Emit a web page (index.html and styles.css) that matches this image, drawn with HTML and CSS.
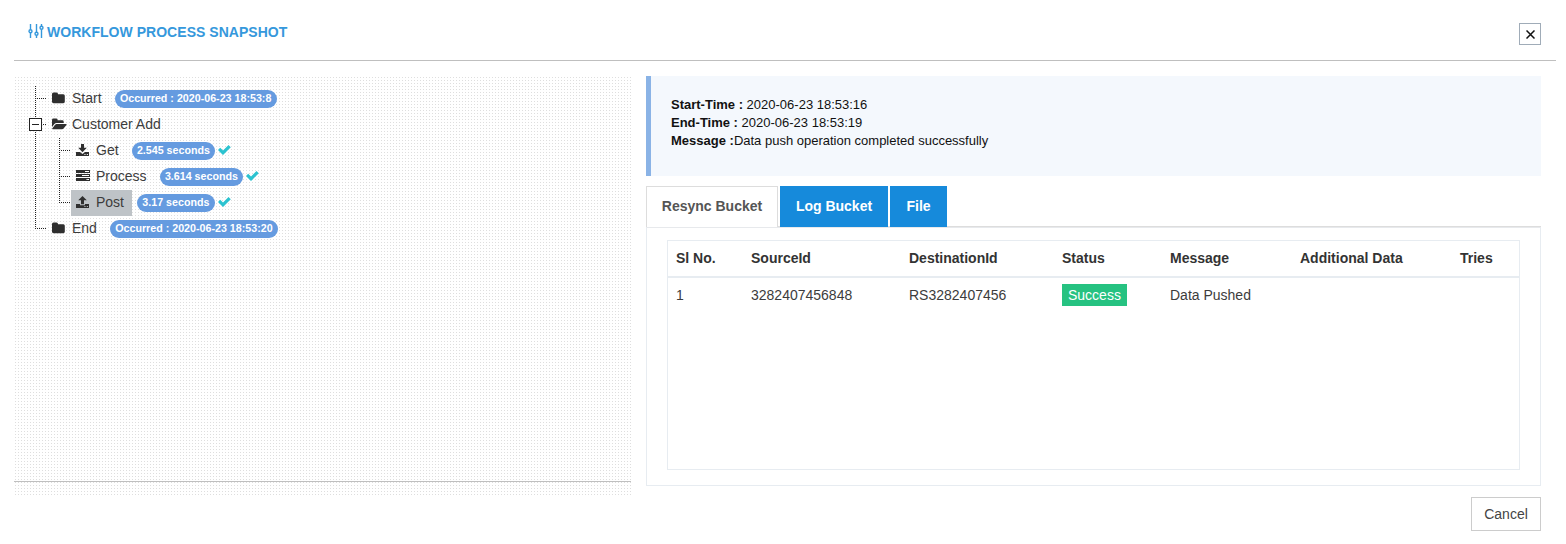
FILE: index.html
```html
<!DOCTYPE html>
<html lang="en">
<head>
<meta charset="utf-8">
<title>Workflow Process Snapshot</title>
<link rel="stylesheet" href="styles.css">
</head>
<body>
<svg class="defs" width="0" height="0" aria-hidden="true">
  <symbol id="folder" viewBox="0 0 13 12"><path d="M0 2Q0 .5 1.5 .5H4.5Q6 .5 6 2V2.3H11.3Q12.8 2.3 12.8 3.8V9.8Q12.8 11.2 11.3 11.2H1.5Q0 11.2 0 9.8Z"/></symbol>
  <symbol id="folder-open" viewBox="0 0 15 12"><path d="M0 9V2Q0 .6 1.4 .6H4.2Q5.6 .6 5.6 2V2.3H10.2Q11.7 2.3 11.7 3.7V5H4.6Q3.2 5 2.2 6.2ZM4.5 6H14.2Q15 6.2 14.4 7L11.8 10.3Q11 11.2 10 11.2H.7Q-.2 11.1 .4 10.3L3 7Q3.7 6.1 4.5 6Z"/></symbol>
  <symbol id="download" viewBox="0 0 13 12"><path d="M5 0H8V3.8H10.8L6.5 8.2L2.2 3.8H5Z"/><path fill-rule="evenodd" d="M0 8H4L6.5 10L9 8H13V12H0ZM8.4 10V11H9.5V10ZM10.8 10V11H11.9V10Z"/></symbol>
  <symbol id="upload" viewBox="0 0 13 12"><path d="M6.5 0L10.8 4.3H8V8.3H5V4.3H2.2Z"/><path fill-rule="evenodd" d="M0 8H4.1V9.2H8.9V8H13V12H0ZM8.4 10V11H9.5V10ZM10.8 10V11H11.9V10Z"/></symbol>
  <symbol id="tasks" viewBox="0 0 14 11"><path fill-rule="evenodd" d="M0 0H14V3H0ZM9 1V2H13V1ZM0 4H14V7H0ZM6 5V6H13V5ZM0 8H14V11H0ZM10.5 9V10H13V9Z"/></symbol>
  <symbol id="check" viewBox="0 0 13 10"><path d="M0 5L2.2 2.8L5 5.5L10.5 0L12.8 2.2L5 9.9Z"/></symbol>
</svg>
<header class="header">
  <h1 class="title">
    <svg class="sliders" width="16" height="15" viewBox="0 0 16 15"><path d="M2.5 0V5.5M2.5 9V14M8.5 0V8M8.5 11.5V14M13.5 0V2M13.5 5.5V14"/><circle cx="2.5" cy="7.2" r="1.5"/><circle cx="8.5" cy="9.7" r="1.5"/><circle cx="13.5" cy="3.7" r="1.5"/></svg>
    <span>WORKFLOW PROCESS SNAPSHOT</span>
  </h1>
  <button class="close" aria-label="Close"><svg width="9" height="9" viewBox="0 0 9 9"><path d="M.5 .5L8.5 8.5M8.5 .5L.5 8.5"/></svg></button>
</header>
<main class="content">
  <section class="tree-panel">
    <div class="tree">
      <div class="row"><i class="branch"></i><span class="node"><svg class="ico"><use href="#folder" width="13" height="12"/></svg>Start</span><span class="badge">Occurred : 2020-06-23 18:53:8</span></div>
      <div class="row"><i class="branch"><b class="toggle"></b></i><span class="node"><svg class="ico"><use href="#folder-open" width="15" height="12"/></svg>Customer Add</span></div>
      <div class="row"><i class="branch trunk"></i><i class="branch"></i><span class="node"><svg class="ico"><use href="#download" width="13" height="12"/></svg>Get</span><span class="badge">2.545 seconds</span><svg class="check" width="13" height="10"><use href="#check"/></svg></div>
      <div class="row"><i class="branch trunk"></i><i class="branch"></i><span class="node"><svg class="ico"><use href="#tasks" width="14" height="11"/></svg>Process</span><span class="badge">3.614 seconds</span><svg class="check" width="13" height="10"><use href="#check"/></svg></div>
      <div class="row"><i class="branch trunk"></i><i class="branch end"></i><span class="node selected"><svg class="ico"><use href="#upload" width="13" height="12"/></svg>Post</span><span class="badge">3.17 seconds</span><svg class="check" width="13" height="10"><use href="#check"/></svg></div>
      <div class="row"><i class="branch end"></i><span class="node"><svg class="ico"><use href="#folder" width="13" height="12"/></svg>End</span><span class="badge">Occurred : 2020-06-23 18:53:20</span></div>
    </div>
  </section>
  <section class="details">
    <div class="info">
      <div><b>Start-Time :</b> 2020-06-23 18:53:16</div>
      <div><b>End-Time :</b> 2020-06-23 18:53:19</div>
      <div><b>Message :</b>Data push operation completed successfully</div>
    </div>
    <nav class="tabs"><a class="tab active">Resync Bucket</a><a class="tab log">Log Bucket</a><a class="tab file">File</a></nav>
    <div class="tab-body">
      <div class="table-box">
        <table>
          <colgroup><col class="c1"><col class="c2"><col class="c3"><col class="c4"><col class="c5"><col class="c6"><col></colgroup>
          <thead><tr><th>Sl No.</th><th>SourceId</th><th>DestinationId</th><th>Status</th><th>Message</th><th>Additional Data</th><th>Tries</th></tr></thead>
          <tbody><tr><td>1</td><td>3282407456848</td><td>RS3282407456</td><td><span class="label">Success</span></td><td>Data Pushed</td><td></td><td></td></tr></tbody>
        </table>
      </div>
    </div>
    <footer class="footer"><button class="cancel">Cancel</button></footer>
  </section>
</main>
</body>
</html>
```
FILE: styles.css
```css
* { box-sizing: border-box; }
body { margin: 0; background: #fff; color: #3c3c3c; font: 14px/20px "Liberation Sans", Arial, sans-serif; overflow: hidden; }
.defs { display: block; }
.header { height: 61px; margin: 0 10px 0 14px; padding: 22px 15px 0 14px; border-bottom: 1px solid #bfbfbf; display: flex; justify-content: space-between; align-items: flex-start; }
.title { margin: 0; display: flex; gap: 3px; font-size: 14px; line-height: 20px; font-weight: bold; color: #3598dc; letter-spacing: .03px; }
.sliders { margin-top: 2px; fill: #fff; stroke: #3598dc; stroke-width: 1.4; }
.close { width: 22px; height: 22px; margin-top: 1px; padding: 1px 0 0 1px; border: 1px solid #a0acb8; background: #fff; display: flex; align-items: center; justify-content: center; }
.close svg { stroke: #111; stroke-width: 1.5; }
.content { display: flex; gap: 15px; padding: 15px 25px 0 14px; }
.tree-panel {
  width: 617px; height: 419px;
  background:
    linear-gradient(#bfbfbf, #bfbfbf) 0 405px / 100% 1px no-repeat,
    linear-gradient(#fff 1px, transparent 1px 2px, #fff 2px) 0 0 / 3px 3px,
    linear-gradient(90deg, #fff 1px, #dedede 1px 2px, #fff 2px) 0 0 / 3px 3px;
}
.tree { padding: 10px 0 0 13px; }
.row { height: 26px; display: flex; align-items: center; }
.branch { width: 24px; height: 26px; flex: none; background: repeating-linear-gradient(#222 0 1px, transparent 1px 2px) 8px 0 / 1px 26px no-repeat, repeating-linear-gradient(90deg, #222 0 1px, transparent 1px 2px) 8px 12px / 11px 1px no-repeat; }
.branch.trunk { background-size: 1px 26px, 0 0; }
.branch.end { background-size: 1px 13px, 11px 1px; }
.node { height: 26px; margin-left: -4px; padding: 0 8px 2px 5px; display: flex; align-items: center; }
.ico { flex: none; fill: #2f2f2f; width: 15px; height: 12px; margin-right: 5px; }
.selected { background: #bec3c7; }
.toggle { display: block; width: 13px; height: 13px; margin: 6px 0 0 2px; border: 1px solid #222; background: linear-gradient(#222, #222) center / 7px 1px no-repeat #fff; }
.badge { height: 18px; margin-left: 5px; padding: 0 5.3px; border-radius: 9px; background: #659be0; color: #fff; font-size: 10.7px; font-weight: bold; line-height: 16px; }
.check { fill: #2cc3d0; margin: 0 0 2px 3px; }
.details { flex: 1; }
.info { height: 100px; padding: 20px 20px; border-left: 5px solid #8ab3e6; background: #f4f8fd; color: #111; font-size: 13px; line-height: 18px; }
.tabs { height: 41px; margin-top: 10px; display: flex; gap: 2px; border-bottom: 1px solid #ddd; }
.tab { height: 41px; text-align: center; font-weight: bold; line-height: 41px; background: #168adb; color: #fff; }
.tab.active { width: 132px; background: #fff; color: #555; border: 1px solid #ddd; border-bottom: 0; line-height: 39px; }
.log { width: 108px; }
.file { width: 57px; }
.tab-body { height: 259px; padding: 12px 20px 15px; border: 1px solid #e7ecf1; border-top-color: #e7e9ec; }
.table-box { width: 853px; height: 230px; border: 1px solid #e7ecf1; }
table { width: 851px; border-collapse: collapse; table-layout: fixed; }
th, td { padding: 7px 8px 8px; text-align: left; white-space: nowrap; line-height: 20px; }
th { color: #333; padding: 6px 8px 7px; border-bottom: 2px solid #e7ecf1; height: 36px; }
.c1 { width: 75px; } .c2 { width: 158px; } .c3 { width: 153px; } .c4 { width: 108px; } .c5 { width: 130px; } .c6 { width: 160px; }
.label { display: inline-block; height: 22px; padding: 0 6px; line-height: 22px; background: #26c281; color: #fff; margin: -1px 0; }
.footer { display: flex; justify-content: flex-end; padding-top: 11px; }
.cancel { width: 70px; height: 34px; padding: 0; border: 1px solid #ccc; background: #fff; color: #444; font: 14px "Liberation Sans", Arial, sans-serif; }
```
